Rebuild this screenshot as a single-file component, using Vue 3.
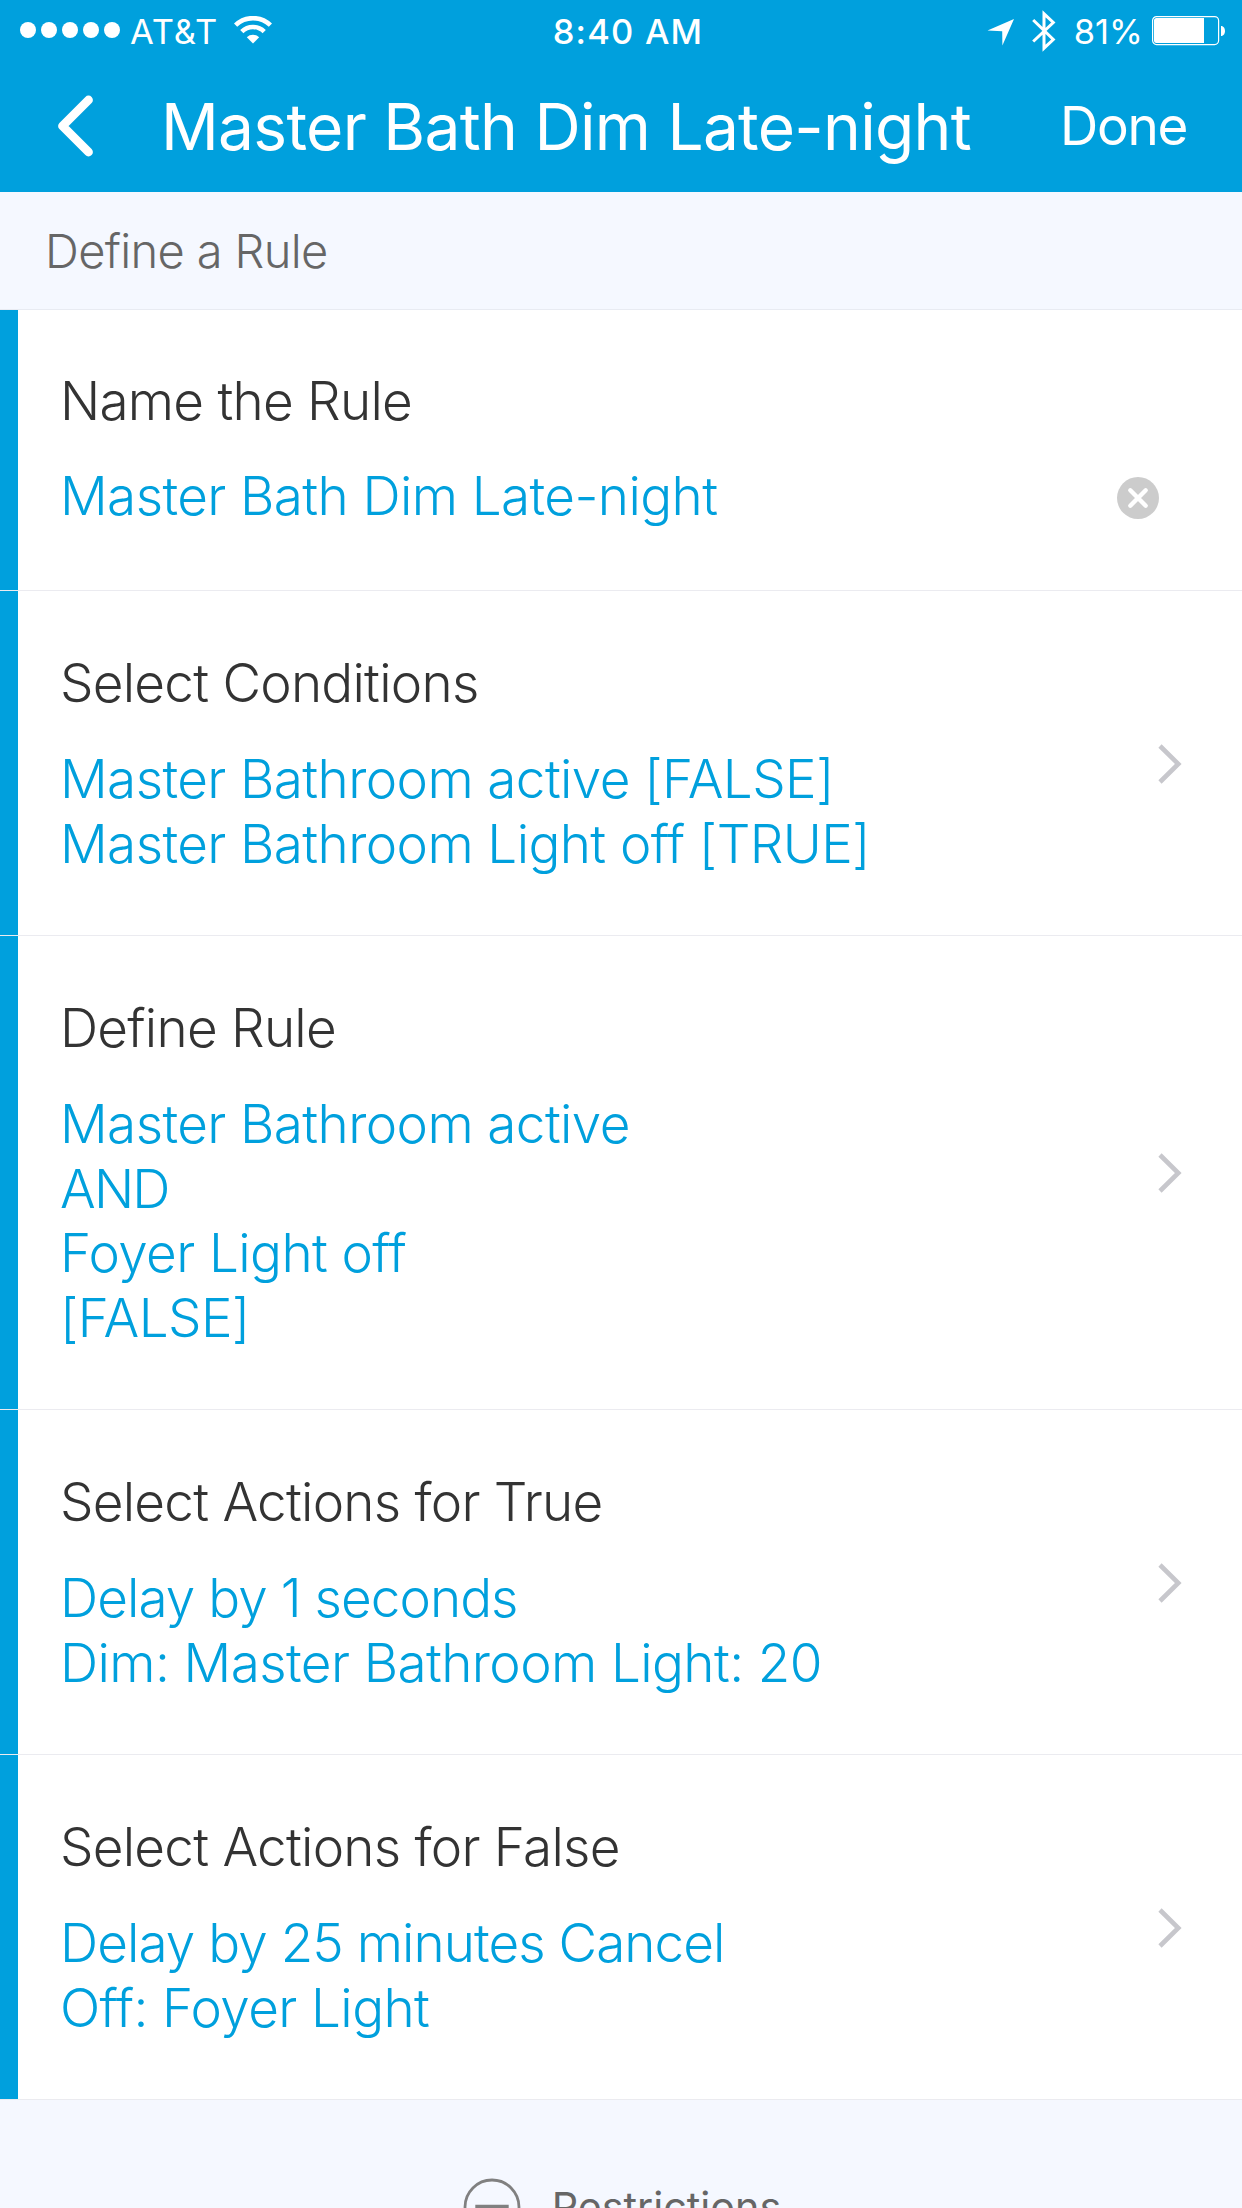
<script setup>
import { ref } from 'vue'

const ruleName = ref('Master Bath Dim Late-night')

const steps = [
  { title: 'Select Conditions', lines: ['Master Bathroom active [FALSE]', 'Master Bathroom Light off [TRUE]'] },
  { title: 'Define Rule', lines: ['Master Bathroom active', 'AND', 'Foyer Light off', '[FALSE]'] },
  { title: 'Select Actions for True', lines: ['Delay by 1 seconds', 'Dim: Master Bathroom Light: 20'] },
  { title: 'Select Actions for False', lines: ['Delay by 25 minutes Cancel', 'Off: Foyer Light'] },
]

const isDelay = (l) => l.startsWith('Delay')
const isOperator = (l) => l === 'AND' || l === 'OR'
</script>

<template>
  <div class="screen">
    <header class="top">
      <div class="status">
        <div class="left">
          <div class="signal"><i v-for="n in 5" :key="n" class="dot"></i></div>
          <span class="carrier">AT&amp;T</span>
          <svg class="wifi" width="38" height="28" viewBox="0 0 38 28">
            <g fill="none" stroke="#fff" stroke-width="4.6">
              <path d="M1.6 9.2a25 25 0 0 1 34.8 0" />
              <path d="M7.8 15.6a16 16 0 0 1 22.4 0" />
            </g>
            <path d="M19 27.5l-6.2-6.3a9 9 0 0 1 12.4 0z" fill="#fff" />
          </svg>
        </div>
        <span class="clock">8:40 AM</span>
        <div class="right">
          <svg class="loc" width="28" height="28" viewBox="0 0 28 28">
            <path d="M27 1L15.4 27.5L15.2 13.2L0.5 12.6z" fill="#fff" />
          </svg>
          <svg class="bt" width="24" height="42" viewBox="0 0 24 42">
            <path d="M1.2 10L21.3 29.5L12 38.2V3.8L21.3 12.5L1.2 31.5" fill="none" stroke="#fff" stroke-width="3" />
          </svg>
          <span class="percent">81%</span>
          <svg class="battery" width="74" height="30" viewBox="0 0 74 30">
            <rect x="0.6" y="0.6" width="66" height="28" rx="4" fill="none" stroke="#fff" stroke-width="1.2" />
            <path d="M4.5 2H52v25H4.5a2.5 2.5 0 0 1-2.5-2.5v-20A2.5 2.5 0 0 1 4.5 2z" fill="#fff" />
            <path d="M69 10c5.3 0 5.3 10 0 10z" fill="#fff" />
          </svg>
        </div>
      </div>
      <nav class="nav">
        <svg class="back" width="36" height="62" viewBox="0 0 36 62">
          <path d="M30.5 5L4.5 31L30.5 57" fill="none" stroke="#fff" stroke-width="8.8" stroke-linecap="round" stroke-linejoin="round" />
        </svg>
        <h1 class="heading">{{ ruleName }}</h1>
        <span class="done">Done</span>
      </nav>
    </header>

    <div class="section">Define a Rule</div>

    <main class="rows">
      <div class="row name">
        <div class="body">
          <div class="title">Name the Rule</div>
          <div class="value">{{ ruleName }}</div>
        </div>
        <svg class="clear" width="42" height="42" viewBox="0 0 42 42">
          <circle cx="21" cy="21" r="21" fill="#ccc" />
          <path d="M13.3 13.3L28.7 28.7M28.7 13.3L13.3 28.7" stroke="#fff" stroke-width="4.4" stroke-linecap="round" />
        </svg>
      </div>
      <div v-for="s in steps" :key="s.title" class="row">
        <div class="body">
          <div class="title">{{ s.title }}</div>
          <div
            v-for="l in s.lines"
            :key="l"
            class="value"
            :class="{ delay: isDelay(l), operator: isOperator(l) }"
          >
            {{ l }}
          </div>
        </div>
        <svg class="chevron" width="24" height="40" viewBox="0 0 24 40">
          <path d="M2 2L20.3 20L2 38" fill="none" stroke="#c7c7cc" stroke-width="4.6" />
        </svg>
      </div>
    </main>

    <footer class="restrictions">
      <svg class="minus" width="58" height="58" viewBox="0 0 58 58">
        <circle cx="29" cy="29" r="27" fill="none" stroke="#808080" stroke-width="2.8" />
        <path d="M12.3 28.7H45.7" stroke="#808080" stroke-width="4" />
      </svg>
      <span class="label">Restrictions</span>
    </footer>
  </div>
</template>

<style>
body {
  margin: 0;
}
</style>

<style scoped>
.screen {
  width: 1242px;
  height: 2208px;
  overflow: hidden;
  background: #f5f8ff;
  font-family: Inter, 'Liberation Sans', sans-serif;
  font-weight: 300;
  white-space: nowrap;
}
.top {
  height: 192px;
  background: #00a0dd;
  color: #fff;
  font-weight: 400;
}
.status {
  box-sizing: border-box;
  display: grid;
  grid-template-columns: 1fr auto 1fr;
  align-items: center;
  height: 60px;
  padding: 3px 16px 0 20px;
  font-size: 34.5px;
}
.left,
.right {
  display: flex;
  align-items: center;
}
.right {
  justify-content: flex-end;
}
.signal {
  display: flex;
  gap: 5px;
  margin: -3px 10px 0 0;
}
.dot {
  width: 16px;
  height: 16px;
  border-radius: 50%;
  background: #fff;
}
.carrier {
  width: 104px;
  letter-spacing: 0.9px;
}
.wifi {
  margin-top: -4px;
}
.clock {
  margin-left: 10px;
  font-weight: 500;
  letter-spacing: 1.2px;
}
.loc {
  margin-right: 17px;
}
.bt {
  margin: -2px 18px 0 0;
}
.percent {
  margin-right: 9px;
}
.battery {
  margin-top: -1px;
}
.nav {
  display: flex;
  align-items: center;
  height: 132px;
  padding: 0 55px 0 58px;
}
.heading {
  flex: 1;
  margin: 1px 0 0 67px;
  font-size: 64px;
  font-weight: 400;
  line-height: 132px;
  letter-spacing: -0.7px;
}
.done {
  font-size: 53px;
  letter-spacing: -1.3px;
}
.section {
  box-sizing: border-box;
  height: 118px;
  padding-left: 45px;
  border-bottom: 1px solid #e8ebf2;
  font-size: 47px;
  line-height: 118px;
  letter-spacing: -0.65px;
  color: #666;
}
.row {
  box-sizing: border-box;
  display: flex;
  align-items: center;
  justify-content: space-between;
  padding: 60px 60px 59px;
  border-bottom: 1px solid #ebebf0;
  background: linear-gradient(to right, #00a0dd 18px, #fff 18px);
  font-size: 53px;
}
.row.name {
  align-items: flex-start;
  height: 281px;
  padding: 59px 83px 0 60px;
}
.title {
  margin-bottom: 32px;
  line-height: 64px;
  letter-spacing: -0.75px;
  color: #333;
}
.name .title {
  margin-bottom: 31px;
}
.value {
  line-height: 64.5px;
  letter-spacing: -0.6px;
  color: #00a0dd;
}
.value.delay {
  letter-spacing: -0.94px;
}
.value.operator {
  letter-spacing: -1.8px;
}
.clear {
  margin-top: 108px;
}
.restrictions {
  display: flex;
  align-items: center;
  justify-content: center;
  gap: 31px;
  height: 214px;
  padding-left: 2px;
  font-size: 41.3px;
  font-weight: 400;
  color: #666;
}
</style>
